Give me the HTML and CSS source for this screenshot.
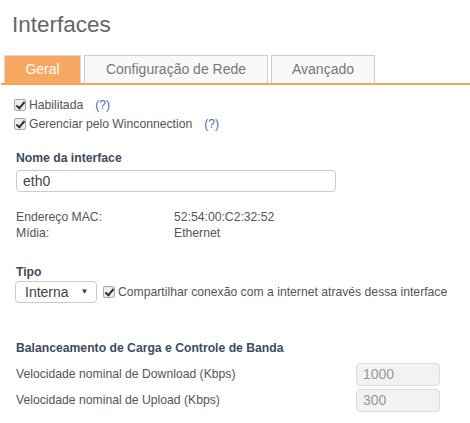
FILE: index.html
```html
<!DOCTYPE html>
<html>
<head>
<meta charset="utf-8">
<link rel="stylesheet" href="styles.css">
</head>
<body>
<h1 class="title">Interfaces</h1>
<div class="tabs">
  <div class="tab active">Geral</div>
  <div class="tab cfg">Configuração de Rede</div>
  <div class="tab adv">Avançado</div>
</div>
<div class="content">
  <div class="checks">
    <label class="chk"><input type="checkbox" checked> Habilitada <span class="help">(?)</span></label>
    <label class="chk"><input type="checkbox" checked> Gerenciar pelo Winconnection <span class="help">(?)</span></label>
  </div>
  <div class="field">
    <div class="flabel">Nome da interface</div>
    <input class="text" type="text" value="eth0">
  </div>
  <div class="info">
    <div class="irow"><span class="ikey">Endereço MAC:</span><span>52:54:00:C2:32:52</span></div>
    <div class="irow"><span class="ikey">Mídia:</span><span>Ethernet</span></div>
  </div>
  <div class="field tipo">
    <div class="flabel">Tipo</div>
    <div class="tiporow">
      <div class="select">Interna <span class="arrow">▼</span></div>
      <label class="chk share"><input type="checkbox" checked> Compartilhar conexão com a internet através dessa interface</label>
    </div>
  </div>
  <div class="balance">
    <div class="flabel">Balanceamento de Carga e Controle de Banda</div>
    <div class="brow"><span>Velocidade nominal de Download (Kbps)</span><input class="dis" type="text" value="1000" disabled></div>
    <div class="brow"><span>Velocidade nominal de Upload (Kbps)</span><input class="dis" type="text" value="300" disabled></div>
  </div>
</div>
</body>
</html>
```
FILE: styles.css
```css
* { box-sizing: border-box; }
body {
  margin: 0;
  font-family: "Liberation Sans", Arial, sans-serif;
  font-size: 12.2px;
  color: #555;
  background: #fff;
  width: 470px;
}
.title {
  margin: 0;
  padding: 12px 0 0 12px;
  height: 55px;
  font-size: 22.5px;
  font-weight: normal;
  color: #666;
  line-height: 26px;
}
.tabs {
  display: flex;
  gap: 3px;
  padding-left: 3px;
  border-bottom: 2px solid #f7a35c;
  margin-left: 1px;
  height: 30px;
}
.tab {
  height: 28px;
  border: 1px solid #ccc;
  border-bottom: none;
  background: #f9f9f9;
  color: #777;
  font-size: 14px;
  line-height: 26px;
  text-align: center;
}
.tab.active {
  width: 77px;
  background: #f7a860;
  color: #fff;
  border-color: #d9d9d9;
}
.tab.cfg { width: 184px; }
.tab.adv { width: 104px; }
.content { padding: 12px 0 0 14px; }
.checks { display: flex; flex-direction: column; gap: 4px; }
.chk {
  display: flex;
  align-items: center;
  gap: 3px;
  height: 15px;
  color: #555;
}
.chk input {
  appearance: none;
  -webkit-appearance: none;
  margin: 0;
  width: 12px;
  height: 12px;
  border: 1px solid #a9a9a9;
  border-radius: 2px;
  background: #ededed;
  position: relative;
  flex: none;
}
.chk input:checked::after {
  content: "";
  position: absolute;
  left: 3px;
  top: 0px;
  width: 3px;
  height: 7px;
  border: solid #333;
  border-width: 0 2px 2px 0;
  transform: rotate(40deg);
}
.help { color: #4a6ab0; margin-left: 9px; }
.field { margin-top: 20px; padding-left: 2px; }
.flabel {
  font-weight: bold;
  color: #3d4b5c;
  height: 16px;
}
.text {
  display: block;
  margin-top: 3px;
  width: 320px;
  height: 22px;
  border: 1px solid #ccc;
  border-radius: 4px;
  padding: 0 6px;
  font: 14px "Liberation Sans", Arial, sans-serif;
  color: #444;
}
.info { margin-top: 17px; padding-left: 2px; }
.irow { display: flex; height: 16px; line-height: 16px; }
.ikey { width: 158px; }
.tipo { margin-top: 24px; }
.tiporow { display: flex; align-items: center; gap: 6px; margin-top: 0; margin-left: -1px; }
.select {
  width: 82px;
  height: 22px;
  border: 1px solid #ccc;
  border-radius: 4px;
  font-size: 14px;
  line-height: 20px;
  color: #444;
  padding-left: 9px;
  display: flex;
  align-items: center;
}
.arrow { font-size: 8px; margin-left: 12px; color: #444; }
.balance { margin-top: 38px; padding-left: 2px; }
.balance .flabel { margin-bottom: 4px; }
.brow {
  display: flex;
  justify-content: space-between;
  align-items: center;
  width: 424px;
  height: 26px;
}
.dis {
  width: 84px;
  height: 23px;
  border: 1px solid #ddd;
  border-radius: 4px;
  background: #f2f2f2;
  color: #999;
  font: 14px "Liberation Sans", Arial, sans-serif;
  padding: 0 6px;
}
```
